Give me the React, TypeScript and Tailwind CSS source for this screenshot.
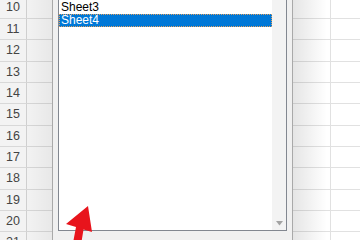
import React from 'react'

const ROWS: { n: number; h: number }[] = [
  { n: 10, h: 22 }, { n: 11, h: 21 }, { n: 12, h: 22 }, { n: 13, h: 21 },
  { n: 14, h: 21 }, { n: 15, h: 22 }, { n: 16, h: 21 }, { n: 17, h: 21 },
  { n: 18, h: 22 }, { n: 19, h: 21 }, { n: 20, h: 21 }, { n: 21, h: 22 },
]

export default function App() {
  return (
    <div className="relative w-[360px] h-[240px] overflow-hidden bg-white font-['Liberation_Sans',Arial,sans-serif] text-[12px]">
      {/* sheet grid */}
      <div className="-mt-[3px] flex flex-col">
        {ROWS.map(r => (
          <div key={r.n} className={`flex ${r.h === 22 ? 'h-[22px]' : 'h-[21px]'}`}>
            <div className="w-[27px] shrink-0 flex items-center justify-center bg-[#f3f3f3] border-r border-b border-r-[#cfcfcf] border-b-[#d8d8d8] text-[#444] text-[12.5px]">
              {r.n}
            </div>
            <div className="w-[304px] shrink-0 border-r border-b border-[#e1e1e1]" />
            <div className="flex-1 border-b border-[#e1e1e1]" />
          </div>
        ))}
      </div>

      {/* dialog shadows */}
      <div className="absolute left-[27px] top-0 w-[25px] h-[240px] bg-[linear-gradient(to_right,rgba(0,0,0,0.05),rgba(0,0,0,0.09))]" />
      <div className="absolute left-[293px] top-0 w-[34px] h-[240px] bg-[linear-gradient(to_right,rgba(0,0,0,0.1),rgba(0,0,0,0))]" />

      {/* dialog */}
      <div className="absolute left-[52px] top-0 w-[241px] h-[240px] bg-[#f0f0f0] border-x border-[#a9a9a9] px-[5px]">
        <div className="h-[231px] flex bg-white border-x border-b border-[#828790]">
          <div className="flex-1 flex flex-col pt-[1px]">
            <div className="h-[13px] pl-[2px] leading-[13px] text-black">Sheet3</div>
            <div className="h-[13px] pl-[1px] leading-[11px] bg-[#0078d7] text-white border border-dotted border-[#e0a060]">Sheet4</div>
          </div>
          <div className="w-[14px] flex flex-col justify-end items-center bg-[#f3f3f3] pb-[4px]">
            <svg width="7" height="5" viewBox="0 0 7 5">
              <path d="M0 0 H7 L3.5 4.5 Z" fill="#a3a3a3" />
            </svg>
          </div>
        </div>
      </div>

      {/* red arrow */}
      <svg className="absolute left-0 top-0" width="360" height="240" viewBox="0 0 360 240">
        <path
          d="M88 206 L92 232 L83.5 229.5 L81 245 L73 243 L76 227 L66 224 Z"
          fill="#e8141c"
        />
      </svg>
    </div>
  )
}
